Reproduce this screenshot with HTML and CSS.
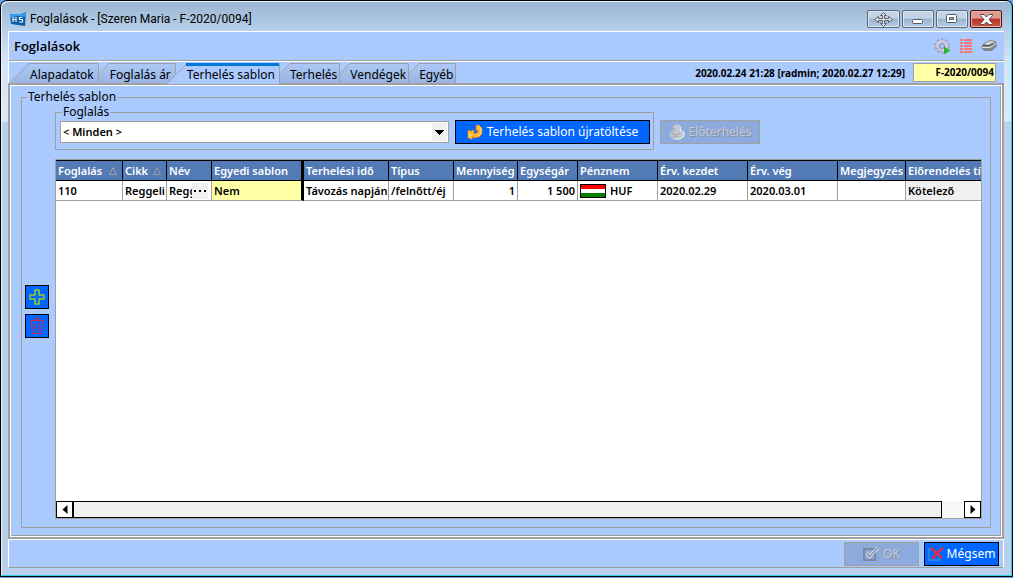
FILE: index.html
```html
<!DOCTYPE html>
<html lang="hu">
<head>
<meta charset="utf-8">
<title>Foglalások - [Szeren Maria - F-2020/0094]</title>
<link rel="stylesheet" href="styles.css">
</head>
<body>
<div class="window">
  <header class="titlebar">
    <svg class="app-icon" width="16" height="15" viewBox="0 0 16 15" aria-hidden="true">
      <path d="M0 2 L11 2 L16 0 L15 14 L1 12 Z" fill="#0b5fa5"/>
      <path d="M0 2 L11 2 L16 0 L15.600 5 L7 4 L0 6 Z" fill="#2fa0ea"/>
      <path d="M3 5v5M6 5v5M3 7.500h3M12.500 5.500H9.500V7.500H12.500V10H9" fill="none" stroke="#e6f4ff" stroke-width="1.200"/>
    </svg>
    <h1 class="title">Foglalások - [Szeren Maria - F-2020/0094]</h1>
    <div class="window-buttons">
      <button class="win-btn win-move" aria-label="Mozgatás"><svg width="19" height="15" viewBox="0 0 19 15"><path d="M9.500 .5L12.500 3.500H10.500V6.500H14.500V4.500L18.500 7.500L14.500 10.500V8.500H10.500V11.500H12.500L9.500 14.500L6.500 11.500H8.500V8.500H4.500V10.500L.5 7.500L4.500 4.500V6.500H8.500V3.500H6.500Z" fill="#e2e2da" stroke="#59606c"/></svg></button>
      <button class="win-btn" aria-label="Kis méret"><svg width="12" height="12" viewBox="0 0 12 12"><rect x=".5" y="6.500" width="10" height="4" rx="1" fill="#fff" stroke="#555c6a"/></svg></button>
      <button class="win-btn" aria-label="Teljes méret"><svg width="12" height="12" viewBox="0 0 12 12"><rect x=".5" y="1.500" width="10" height="8" rx="1" fill="#fff" stroke="#555c6a"/><rect x="3.500" y="4.500" width="4" height="2" fill="#a9bdd3" stroke="#555c6a"/></svg></button>
      <button class="win-btn win-close" aria-label="Bezárás"><svg width="13" height="11" viewBox="0 0 13 11"><path d="M.5 .5H4L6.500 3L9 .5H12.500V1.500L9 5.500L12.500 9.500V10.500H9L6.500 8L4 10.500H.5V9.500L4 5.500L.5 1.500Z" fill="#fff" stroke="#5a4650"/></svg></button>
    </div>
  </header>

  <div class="client">
    <div class="heading">
      <h2 class="heading-text">Foglalások</h2>
      <div class="tools">
        <button class="tool" aria-label="Beállítások"><svg width="17" height="17" viewBox="0 0 17 17"><circle cx="8" cy="8" r="6.500" fill="none" stroke="#a3a8c8" stroke-width="3" stroke-dasharray="2.400 1.700"/><circle cx="8" cy="8" r="6" fill="#c9cce2"/><path d="M3 10A5.500 5.500 0 0 0 8 13.500" fill="none" stroke="#999ebf"/><circle cx="8" cy="8" r="2.500" fill="#abcbff" stroke="#8489ab"/><path d="M10 8.500L16.500 12.500L10 16.500Z" fill="#27b52c"/></svg></button>
        <button class="tool" aria-label="Lista"><svg width="12" height="14" viewBox="0 0 12 14"><path d="M0 1h3M0 4h3M0 7h3M0 10h3M0 13h3M4 1h8M4 4h8M4 7h8M4 10h8M4 13h8" stroke="#f5777e" stroke-width="2"/></svg></button>
        <button class="tool" aria-label="Nyomtatás"><svg width="16" height="14" viewBox="0 0 16 14"><path d="M0 8L3 4L9 1L15 2L16 7L11 12L4 12L1 10Z" fill="#80878a"/><path d="M3 5L9 2L14 3L7 6Z" fill="#d4d9da"/><path d="M1 8.500L9 8.500L15 4.500" stroke="#dfe4e6" fill="none"/><path d="M2 6.500L8 6.500L12 4.500" stroke="#50575a" fill="none"/></svg></button>
      </div>
    </div>

    <div class="tabrow">
      <div class="tabs" role="tablist">
        <button class="tab" role="tab">Alapadatok</button>
        <button class="tab" role="tab">Foglalás ár</button>
        <button class="tab tab-active" role="tab" aria-selected="true">Terhelés sablon</button>
        <button class="tab tab-narrow" role="tab">Terhelés</button>
        <button class="tab tab-narrow" role="tab">Vendégek</button>
        <button class="tab tab-narrow" role="tab">Egyéb</button>
      </div>
      <span class="stamp">2020.02.24 21:28 [radmin; 2020.02.27 12:29]</span>
      <input class="code" aria-label="Foglalás kódja" value="F-2020/0094" readonly>
    </div>

    <main class="page">
      <fieldset class="group template">
        <legend>Terhelés sablon</legend>
        <div class="side">
          <button class="btn btn-square" aria-label="Hozzáadás"><svg width="16" height="16" viewBox="0 0 16 16"><path d="M6 1H10V6H15V10H10V15H6V10H1V6H6Z" fill="none" stroke="#3f9a78" stroke-width="2"/><path d="M6 1H10V6H15V10H10V15H6V10H1V6H6Z" fill="none" stroke="#a5cf3c"/></svg></button>
          <button class="btn btn-square" aria-label="Törlés"><svg width="14" height="16" viewBox="0 0 14 16"><path d="M4.500 2V.5H9.500V2M0 2.500H14M1.500 3L2.500 15.500H11.500L12.500 3M5.500 5V13M8.500 5V13" fill="none" stroke="#d02a50"/></svg></button>
        </div>
        <div class="work">
          <div class="filter">
            <fieldset class="group booking">
              <legend>Foglalás</legend>
              <select class="combo" aria-label="Foglalás"><option>&lt; Minden &gt;</option></select>
              <button class="btn btn-reload"><svg width="16" height="16" viewBox="0 0 16 16"><path d="M9 1L12 1L15 4V10L12 13L7 14L6 12.500L5 15.500L1 14L1 6L4 7L7 6V9.500L10 9L11 7L9 6Z" fill="#ffb52c" stroke="#d97a13" stroke-width=".6"/><path d="M12 2L14 5V9L11 12M2 8V13M3 11L6 10.500" fill="none" stroke="#ffe49b"/></svg>Terhelés sablon újratöltése</button>
            </fieldset>
            <button class="btn btn-pre" disabled><svg width="16" height="16" viewBox="0 0 16 16"><path d="M5 1L9 0L12 2L11 6L15 8L15 12L10 15H4L1 12L1 8L6 7L3 5Z" fill="#c3c8d0"/><path d="M3 4L6 5M2 9L7 11L11 9M4 13H10" fill="none" stroke="#98a0ac"/><path d="M12 3L11 6L15 8V12L11 15H5" fill="none" stroke="#f4f6f8"/></svg>Előterhelés</button>
          </div>
          <div class="grid">
            <div class="grid-body">
              <table class="table">
                <colgroup><col class="c1"><col class="c2"><col class="c3"><col class="c4"><col class="c5"><col class="c6"><col class="c7"><col class="c8"><col class="c9"><col class="c10"><col class="c10"><col class="c12"><col></colgroup>
                <thead>
                  <tr>
                    <th><span class="sorted">Foglalás<svg width="8" height="8" viewBox="0 0 8 8"><path d="M4 .5L7.500 7.500H.5Z" fill="none" stroke="#a0a0a0"/></svg></span></th>
                    <th><span class="sorted">Cikk<svg width="8" height="8" viewBox="0 0 8 8"><path d="M4 .5L7.500 7.500H.5Z" fill="none" stroke="#a0a0a0"/></svg></span></th>
                    <th>Név</th><th class="frozen">Egyedi sablon</th><th>Terhelési idő</th><th>Típus</th><th>Mennyiség</th><th>Egységár</th><th>Pénznem</th><th>Érv. kezdet</th><th>Érv. vég</th><th>Megjegyzés</th><th>Előrendelés típus</th>
                  </tr>
                </thead>
                <tbody>
                  <tr>
                    <td>110</td><td>Reggeli</td>
                    <td class="with-more"><span class="more-cell"><span class="clip">Reggeli</span><button class="more" aria-label="Választás"><svg width="12" height="2" viewBox="0 0 12 2"><path d="M0 0h2v2H0zM5 0h2v2H5zM10 0h2v2h-2z"/></svg></button></span></td>
                    <td class="frozen own">Nem</td><td>Távozás napján</td><td>/felnőtt/éj</td><td class="num">1</td><td class="num">1 500</td>
                    <td><span class="currency"><svg width="26" height="14" viewBox="0 0 26 14"><path d="M0 0h26v14H0z"/><path d="M1 1h24v4H1z" fill="#f00"/><path d="M1 5h24v4H1z" fill="#fff"/><path d="M1 9h24v4H1z" fill="#008000"/></svg>HUF</span></td>
                    <td>2020.02.29</td><td>2020.03.01</td><td></td><td class="readonly">Kötelező</td>
                  </tr>
                </tbody>
              </table>
            </div>
            <div class="scroll">
              <button class="scroll-btn" aria-label="Balra"><svg width="6" height="9" viewBox="0 0 6 9"><path d="M5.500 0V9L.5 4.500Z"/></svg></button>
              <div class="track"><div class="thumb"></div></div>
              <button class="scroll-btn" aria-label="Jobbra"><svg width="6" height="9" viewBox="0 0 6 9"><path d="M.5 0V9L5.500 4.500Z"/></svg></button>
            </div>
          </div>
        </div>
      </fieldset>
    </main>

    <footer class="footer">
      <button class="btn btn-foot btn-ok" disabled><svg width="16" height="14" viewBox="0 0 16 14"><path d="M1 2H12V13H1Z" fill="none" stroke="#7889a5" stroke-width="2"/><path d="M3.500 6L6.500 9.500L15 .5" fill="none" stroke="#dfe5ee" stroke-width="3"/><path d="M3.500 6L6.500 9.500L15 .5" fill="none" stroke="#8090aa" stroke-width="1.500"/></svg>OK</button>
      <button class="btn btn-foot btn-cancel"><svg width="16" height="14" viewBox="0 0 16 14"><path d="M3 2H1V13H11V11" fill="none" stroke="#2b8fe0" stroke-width="1.500"/><path d="M3 1L14 11M15 .5L4 11.500" fill="none" stroke="#d8314f" stroke-width="2.500"/></svg>Mégsem</button>
    </footer>
  </div>
</div>
</body>
</html>
```
FILE: styles.css
```css
:root {
  --face: #abcbff;
  --line: #a0a0a0;
  --blue: #0066ff;
  --frame: #b9d1ea;
}
* { box-sizing: border-box; }
body {
  margin: 0;
  background: #5f9ee6;
  font: 12px/16px "Noto Sans", "Open Sans", sans-serif;
  color: #000;
}
button, input, select { font: inherit; color: inherit; margin: 0; padding: 0; }
svg { display: block; flex: none; }

.window {
  display: flex;
  flex-direction: column;
  height: calc(100vh - 1px);
  padding: 0 8px 8px 7px;
  border: 1px solid #000;
  border-radius: 7px 7px 0 0;
  box-shadow: inset -1px -1px #35d0ee, inset 1px 1px #eaf3fb;
  background: linear-gradient(#99b4d1, #b9d1ea 30px, #d5e4f4 60px, #dce9f7 120px, var(--frame) 121px);
}
.titlebar { display: flex; align-items: center; gap: 4px; height: 30px; padding: 6px 2px 0; }
.title { flex: 1; margin: 0; font: 12px/16px Roboto, sans-serif; }
.window-buttons { display: flex; gap: 2px; }
.win-btn {
  display: grid;
  place-items: center;
  width: 32px;
  height: 18px;
  border: 1px solid #59697d;
  border-radius: 2px;
  background: linear-gradient(#c3d4e6 45%, #9bb4cf 50%, #b5cce4);
  box-shadow: inset 0 0 0 1px #dae6f2;
}
.win-move { width: 33px; }
.win-close {
  border-color: #47131a;
  background: linear-gradient(#dd9c8f 45%, #b9301f 50%, #cc5b47);
  box-shadow: inset 0 0 0 1px #e5ada3;
}

.client { flex: 1; display: flex; flex-direction: column; min-height: 0; background: var(--face); }
.heading {
  display: flex;
  align-items: center;
  justify-content: space-between;
  height: 30px;
  padding: 0 7px 0 5px;
  border: solid #fff;
  border-width: 1px 0 0 1px;
  border-bottom: 1px solid var(--line);
}
.heading-text { margin: 0; font: 600 13px/18px "Open Sans", sans-serif; }
.tools { display: flex; align-items: center; gap: 9px; }
.tool { border: 0; background: none; }

.tabrow {
  display: flex;
  align-items: flex-end;
  height: 22px;
  padding-right: 8px;
  border-top: 1px solid #fff;
  border-left: 1px solid #fff;
}
.tabs { flex: 1; display: flex; }
.tab {
  position: relative;
  z-index: 3;
  height: 20px;
  margin-left: -10px;
  padding: 4px 5px 0 21px;
  border: 0;
  background: none;
  white-space: nowrap;
}
.tab:first-child { z-index: 4; margin-left: 0; }
.tab:nth-child(4) { z-index: 2; }
.tab:nth-child(5) { z-index: 1; }
.tab:nth-child(6) { z-index: 0; }
.tab.tab-active { z-index: 5; }
.tab-narrow { padding-left: 20px; padding-right: 3px; }
.tab::before, .tab::after {
  content: "";
  position: absolute;
  z-index: -1;
  top: 0;
  bottom: 0;
  background: linear-gradient(#acc9f6, #98b5e3);
}
.tab::before { left: 0; width: 20px; border-left: 1px solid var(--line); transform: skewX(-45deg); transform-origin: bottom; }
.tab::after { left: 20px; right: 0; border: 1px solid var(--line); border-width: 1px 1px 0 0; border-radius: 0 2px 0 0; }
.tab-active::before, .tab-active::after { background: var(--face); bottom: -1px; }
.tab-active::after { border-top: 3px solid #0078d7; }
.stamp { align-self: center; margin-right: 8px; font-weight: 700; font-size: 10px; }
.code {
  align-self: center;
  width: 83px;
  height: 19px;
  padding: 0 1px 2px;
  border: 1px solid var(--line);
  background: #ffffa8;
  text-align: right;
  font-weight: 700;
  font-size: 10px;
}

.page {
  flex: 1;
  display: flex;
  min-height: 0;
  padding: 5px 11px 9px;
  border: 2px solid var(--line);
  box-shadow: inset 1px 1px #fff, inset -1px -1px #fff, inset -2px -2px var(--line);
}
.group { min-width: 0; margin: 0; border: 1px solid var(--line); }
.group legend { padding: 0 1px; line-height: 14px; }
.template { flex: 1; display: flex; gap: 6px; padding: 1px 8px 8px 3px; }
.template > legend { margin-left: 2px; }
.side { display: flex; flex-direction: column; justify-content: center; gap: 5px; margin-top: -2px; }
.work { flex: 1; display: flex; flex-direction: column; min-width: 0; gap: 9px; }
.filter { display: flex; align-items: flex-end; gap: 6px; }
.booking { flex: 0 1 599px; display: flex; gap: 6px; padding: 1px 3px 5px 4px; }
.booking > legend { margin-left: 2px; }
.combo {
  flex: 1;
  appearance: none;
  height: 22px;
  align-self: center;
  padding: 0 20px 0 2px;
  border: 1px solid var(--line);
  border-radius: 0;
  font-weight: 600;
  font-size: 11px;
  background:
    conic-gradient(from -45deg at 50% 100%, #000 90deg, transparent 0) no-repeat right 4px center / 9px 5px,
    linear-gradient(#f0f0f0, #f0f0f0) no-repeat right 1px center / 15px 18px,
    #fff;
}
.btn {
  display: flex;
  align-items: center;
  justify-content: center;
  gap: 4px;
  height: 24px;
  border: 1px solid #000;
  background: var(--blue);
  color: #fff;
  white-space: nowrap;
}
.btn:disabled { border-color: var(--line); background: #8cabdc; color: #c5cad2; text-shadow: 1px 1px #8390a6; }
.btn-square { width: 24px; }
.btn-reload { width: 195px; }
.btn-pre { width: 100px; margin-bottom: 6px; }

.grid { flex: 1; display: flex; flex-direction: column; min-height: 0; border: 1px solid var(--line); background: #fff; }
.grid-body { flex: 1; overflow: hidden; }
.table { width: 100%; table-layout: fixed; border-collapse: separate; border-spacing: 0; font-weight: 600; font-size: 11px; }
.c1 { width: 67px; }
.c2 { width: 44px; }
.c3 { width: 45px; }
.c4 { width: 92px; }
.c5 { width: 85px; }
.c6 { width: 65px; }
.c7 { width: 64px; }
.c8 { width: 60px; }
.c9 { width: 80px; }
.c10 { width: 90px; }
.c12 { width: 68px; }
th, td { height: 20px; padding: 0 2px; overflow: hidden; white-space: nowrap; text-align: left; line-height: 18px; }
th { height: 21px; border: solid #000; border-width: 1px 1px 1px 0; background: #527ab5; color: #fff; font-weight: 600; }
td { border: solid var(--line); border-width: 0 1px 1px 0; }
th:last-child, td:last-child { border-right: 0; }
th.frozen, td.frozen { border-right: 3px solid #000; }
.own { background: #ffffa8; }
.readonly { background: #f0f0f0; }
.num { text-align: right; }
.sorted { display: flex; align-items: center; justify-content: space-between; padding-right: 3px; }
.more-cell, .currency { display: flex; align-items: center; }
.currency { gap: 4px; }
.clip { width: 23px; overflow: hidden; }
td.with-more { padding-right: 1px; }
.more { display: grid; place-items: center; width: 16px; height: 16px; border: 0; background: #f0f0f0; }

.scroll { display: flex; height: 17px; }
.scroll-btn { display: grid; place-items: center; width: 17px; border: 1px solid #000; background: #fff; }
.track { flex: 1; background: #f8f8f8; }
.thumb { width: 97.5%; height: 100%; border: 1px solid #000; background: #f0f0f0; }

.footer {
  display: flex;
  justify-content: flex-end;
  gap: 5px;
  padding: 2px 4px 1px;
  border: 1px solid #fff;
  border-bottom-color: var(--line);
}
.btn-foot { width: 75px; }
.btn-cancel { gap: 3px; }
```
